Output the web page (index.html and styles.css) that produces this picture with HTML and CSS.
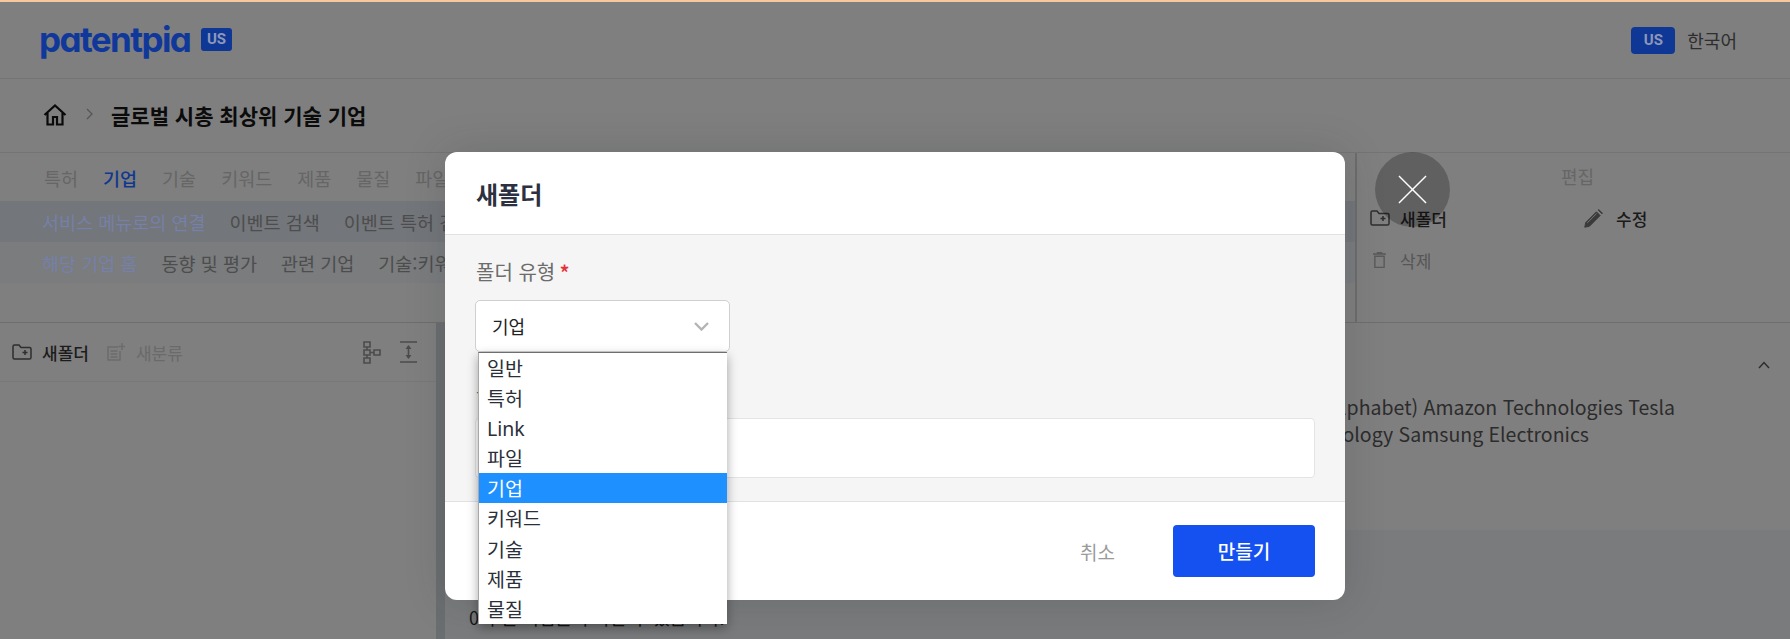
FILE: index.html
```html
<!DOCTYPE html>
<html lang="ko">
<head>
<meta charset="utf-8">
<title>새폴더</title>
<link rel="stylesheet" href="styles.css">
</head>
<body>
<div class="page">
  <header class="topbar">
    <div class="brand"><span class="logo">patentpia</span><span class="logo-tag">US</span></div>
    <div class="lang"><span class="lang-tag">US</span><span class="lang-name">한국어</span></div>
  </header>
  <nav class="crumbs">
    <svg class="home" viewBox="0 0 24 22"><path d="M1.5 11 12 1.5 22.500 11M4.500 9v11.500h5.500v-7.500h4v7.500h5.500V9" fill="none" stroke="#0a0a0a" stroke-width="2.200" stroke-linejoin="miter"/></svg>
    <svg class="crumb-sep" viewBox="0 0 7 12"><path d="M1 1l5 5-5 5" fill="none" stroke="#555" stroke-width="1.200"/></svg>
    <h1 class="crumb-title">글로벌 시총 최상위 기술 기업</h1>
  </nav>
  <section class="toolbar">
    <div class="tool-main">
      <div class="tabs">
        <span>특허</span><span class="on">기업</span><span>기술</span><span>키워드</span><span>제품</span><span>물질</span><span>파일</span>
      </div>
      <div class="subrow subrow-a"><span class="lead">서비스 메뉴로의 연결</span><span>이벤트 검색</span><span>이벤트 특허 검색</span></div>
      <div class="subrow subrow-b"><span class="lead">해당 기업 홈</span><span>동향 및 평가</span><span>관련 기업</span><span>기술:키워드</span></div>
    </div>
    <div class="tool-side">
      <div class="side-title">편집</div>
      <div class="side-grid">
        <span class="side-item">
          <svg class="ico-folder" viewBox="0 0 20 16"><path d="M1 2.500q0-1.500 1.500-1.500h4.500l2 2.500h8.500q1.500 0 1.500 1.500v8.500q0 1.500-1.500 1.500h-15q-1.500 0-1.500-1.500zM13 6v5M10.500 8.500h5" fill="none" stroke="#2e2e2e" stroke-width="1.500"/></svg>
          새폴더
        </span>
        <span class="side-item side-edit">
          <svg class="ico-pencil" viewBox="0 0 18 18"><path d="M1.500 16.500l.8-4L11.500 3.300l3.200 3.200L5.500 15.700zM13 1.800l.5-.5 3.200 3.200-.5.500z" fill="#3a3a3a" stroke="#3a3a3a" stroke-width=".8"/><path d="M3.600 12.800L11.600 4.800" stroke="#77797b" stroke-width=".8"/></svg>
          수정
        </span>
        <span class="side-item dim">
          <svg class="ico-trash" viewBox="0 0 14 18"><path d="M2 5h10v12H2zM0 2.500h14M4 1h6" fill="none" stroke="#5a5a5a" stroke-width="1.500"/></svg>
          삭제
        </span>
      </div>
    </div>
  </section>
  <main class="workspace">
    <aside class="tree">
      <div class="tree-head">
        <span class="tree-btn">
          <svg class="ico-folder" viewBox="0 0 20 16"><path d="M1 2.500q0-1.500 1.500-1.500h4.500l2 2.500h8.500q1.500 0 1.500 1.500v8.500q0 1.500-1.500 1.500h-15q-1.500 0-1.500-1.500zM13 6v5M10.500 8.500h5" fill="none" stroke="#2e2e2e" stroke-width="1.500"/></svg>
          새폴더
        </span>
        <span class="tree-btn off">
          <svg class="ico-cat" viewBox="0 0 18 18"><path d="M11 4H1v13h12V8M3.500 8h7M3.500 11h7M3.500 14h7M15 0v7M11.500 3.500h7" fill="none" stroke="#6c6c6c" stroke-width="1.500"/></svg>
          새분류
        </span>
        <span class="tree-tools">
          <svg class="ico-tree" viewBox="0 0 18 23"><path d="M1 1h6v5H1zM1 9h6v5H1zM1 17h6v5H1zM11 9h6v5h-6zM4 6v3M4 14v3M7 11.500h4" fill="none" stroke="#4c4c4c" stroke-width="1.600"/></svg>
          <svg class="ico-expand" viewBox="0 0 17 22"><path d="M0 1h17M0 21h17M8.500 5v12" fill="none" stroke="#4c4c4c" stroke-width="1.600"/><path d="M5.500 8l3-4 3 4zM5.500 14l3 4 3-4z" fill="#4c4c4c"/></svg>
        </span>
      </div>
    </aside>
    <div class="gutter"></div>
    <div class="content">
      <div class="card">
        <div class="card-head"><svg class="ico-up" viewBox="0 0 12 8"><path d="M1 7l5-5.500L11 7" fill="none" stroke="#2e2e2e" stroke-width="1.500"/></svg></div>
        <p class="card-line line-a"><span>NVIDIA Apple Microsoft Corporation Saudi Aramco Broadcom Google(Alphabet) Amazon Technologies Tesla</span></p>
        <p class="card-line line-b"><span>Meta Platforms Eli Lilly Taiwan Semiconductor Manufacturing Technology Samsung Electronics</span></p>
      </div>
      <div class="band"><p class="band-text">0이 된 기업을 추가할 수 있습니다.</p></div>
    </div>
  </main>
</div>

<div class="dialog">
  <div class="dialog-head">새폴더</div>
  <div class="dialog-body">
    <label class="field-label">폴더 유형 <em>*</em></label>
    <div class="select"><span>기업</span>
      <svg class="select-arrow" viewBox="0 0 15 9"><path d="M1 1l6.500 6.500L14 1" fill="none" stroke="#b4b4b4" stroke-width="2.400"/></svg>
    </div>
    <label class="field-label second">폴더 이름 <em>*</em></label>
    <div class="input"></div>
  </div>
  <div class="dialog-foot">
    <span class="btn-cancel">취소</span>
    <span class="btn-ok">만들기</span>
  </div>
  <ul class="options">
    <li>일반</li><li>특허</li><li>Link</li><li>파일</li><li class="sel">기업</li><li>키워드</li><li>기술</li><li>제품</li><li>물질</li>
  </ul>
</div>
<div class="close-btn"><svg viewBox="0 0 30 30"><path d="M1 1l28 28M29 1L1 29" fill="none" stroke="#fff" stroke-width="1.500"/></svg></div>
</body>
</html>
```
FILE: styles.css
```css
* { box-sizing: border-box; }
html, body { margin: 0; height: 639px; overflow: hidden; }
body { background: #7f7f7f; font-family: "Noto Sans CJK KR", "Noto Sans", sans-serif; color: #111; }
.page { display: flex; flex-direction: column; height: 639px; border-top: 2px solid #f6c89c; }

.topbar { height: 77px; flex: none; display: flex; align-items: center; justify-content: space-between; padding: 0 53px 0 39px; border-bottom: 1px solid #747474; }
.brand { display: flex; align-items: center; gap: 12px; margin-top: -1px; }
.logo { font-family: Inter, sans-serif; font-feature-settings: "cv11" 1; font-weight: 700; font-size: 35px; letter-spacing: -1.600px; line-height: 40px; color: #10389a; width: 150px; white-space: nowrap; margin-top: -2px; }
.logo-tag { width: 31px; height: 23px; border-radius: 3px; background: #0f3796; color: #8e99b8; font: 700 15px/23px Roboto, sans-serif; text-align: center; }
.lang { display: flex; align-items: center; gap: 12px; }
.lang-tag { width: 44px; height: 27px; border-radius: 4px; background: #0f3796; color: #8e98b6; font: 700 15px/27px Roboto, sans-serif; text-align: center; }
.lang-name { font-size: 18px; color: #2e2e2e; }

.crumbs { height: 74px; flex: none; display: flex; align-items: center; padding-left: 43px; border-bottom: 1px solid #747474; }
.home { width: 24px; height: 22px; margin-top: -1px; }
.crumb-sep { width: 7px; height: 12px; margin: -4px 0 0 19px; }
.crumb-title { margin: -2px 0 0 18px; font-size: 21px; font-weight: 700; color: #0b0b0b; line-height: 28px; }

.toolbar { height: 170px; flex: none; display: flex; border-bottom: 1px solid #6e6e6e; }
.tool-main { width: 1355px; flex: none; overflow: hidden; }
.tabs { height: 48px; display: flex; align-items: center; gap: 25px; padding: 2px 0 0 44px; font-size: 18.500px; color: #666; }
.tabs .on { color: #10388f; font-weight: 500; }
.subrow { height: 41px; display: flex; align-items: center; gap: 24px; padding-left: 42px; font-size: 18.500px; color: #4d4d4d; }
.subrow-a { background: #73767a; }
.subrow-b { background: #7a7c7e; }
.lead { color: #7680a8; }
.tool-side { flex: 1; border-left: 2px solid #6c6c6c; padding-top: 12px; }
.side-title { text-align: center; margin-left: 8px; font-size: 18px; line-height: 22px; color: #666; }
.side-grid { display: grid; grid-template-columns: 216px 1fr; padding: 17px 0 0 13px; row-gap: 14px; }
.side-item { display: flex; align-items: center; gap: 10px; height: 28px; font-size: 17px; font-weight: 500; color: #1a1a1a; }
.side-edit { margin-left: -3px; }
.side-item.dim { color: #565656; font-weight: 400; padding-left: 3px; gap: 14px; }
.ico-folder { width: 20px; height: 16px; flex: none; }
.ico-pencil { width: 21px; height: 21px; flex: none; margin-right: 2px; }
.ico-trash { width: 13px; height: 18px; flex: none; }

.workspace { flex: 1; display: flex; min-height: 0; }
.tree { width: 436px; flex: none; }
.tree-head { height: 59px; display: flex; align-items: center; padding: 0 19px 0 12px; border-bottom: 1px solid #787878; }
.tree-btn { display: flex; align-items: center; gap: 10px; font-size: 17px; font-weight: 500; color: #1c1c1c; }
.tree-btn.off { margin-left: 18px; gap: 11px; color: #6a6a6a; font-weight: 400; }
.ico-cat { width: 18px; height: 18px; }
.tree-tools { margin-left: auto; display: flex; align-items: center; gap: 19px; }
.ico-tree { width: 18px; height: 23px; }
.ico-expand { width: 17px; height: 22px; }
.gutter { width: 9px; flex: none; background: #6b6e70; }
.content { flex: 1; display: flex; flex-direction: column; min-width: 0; }
.card { height: 207px; padding: 38px 20px 0 24px; }
.card-head { display: flex; justify-content: flex-end; height: 15px; margin-bottom: 17px; }
.ico-up { width: 12px; height: 8px; }
.card-line { margin: 0; display: flex; justify-content: flex-end; font-size: 19.500px; line-height: 27px; color: #2c2c2c; white-space: nowrap; }
.line-a { width: 1206px; }
.line-b { width: 1120px; }
.band { flex: 1; background: #797b7c; padding: 73px 0 0 24px; }
.band-text { margin: 0; font-size: 18px; line-height: 28px; color: #161616; }

.dialog { position: absolute; left: 445px; top: 152px; width: 900px; height: 448px; display: flex; flex-direction: column; border-radius: 12px; background: #fff; box-shadow: 0 0 40px rgba(40,45,50,.18); }
.dialog-head { height: 83px; flex: none; padding: 0 31px; border-bottom: 1px solid #e2e2e2; border-radius: 12px 12px 0 0; font-size: 24px; font-weight: 700; line-height: 84px; color: #2b3140; }
.dialog-body { flex: 1; background: #f5f5f5; padding: 23px 30px 0; }
.field-label { display: block; height: 28px; padding-left: 1px; font-size: 20px; line-height: 28px; color: #6c6c6c; }
.field-label em { color: #e5323b; font-style: normal; font-weight: 700; font-size: 19px; margin-left: -1px; }
.field-label.second { margin-top: 27px; }
.select { margin-top: 14px; width: 255px; height: 52px; border: 1px solid #d0d0d0; border-radius: 5px; background: #fff; display: flex; align-items: center; justify-content: space-between; padding: 0 20px 0 16px; font-size: 18px; color: #222; }
.select-arrow { width: 15px; height: 9px; }
.input { margin-top: 11px; height: 60px; background: #fff; border: 1px solid #e4e4e4; border-radius: 4px; }
.dialog-foot { height: 99px; flex: none; border-top: 1px solid #e2e2e2; border-radius: 0 0 12px 12px; display: flex; align-items: center; justify-content: flex-end; gap: 58px; padding: 0 30px 0 0; }
.btn-cancel { font-size: 19px; color: #9a9a9a; }
.btn-ok { width: 142px; height: 52px; border-radius: 4px; background: #1551f0; color: #fff; font-size: 19px; font-weight: 500; line-height: 52px; text-align: center; }
.options { position: absolute; left: 33px; top: 200px; width: 249px; height: 272px; margin: 0; padding: 0; list-style: none; background: #fff; border-top: 1px solid #6e6e6e; border-left: 1px solid #a8a8a8; box-shadow: 0 4px 10px rgba(0,0,0,.35); }
.options li { height: 30.100px; padding-left: 8px; font-family: "Noto Sans", "Noto Sans CJK KR", sans-serif; font-size: 19.500px; line-height: 32px; color: #2a2f3a; }
.options .sel { background: #1e90ff; color: #fff; }
.close-btn { position: absolute; left: 1375px; top: 152px; width: 75px; height: 75px; border-radius: 50%; background: rgba(0,0,0,.24); display: flex; align-items: center; justify-content: center; }
.close-btn svg { width: 29px; height: 29px; }
```
